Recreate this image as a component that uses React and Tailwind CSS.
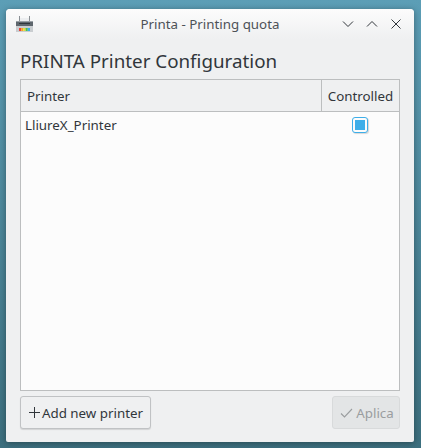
import React from "react";

function PrinterIcon() {
  return (
    <svg width="17" height="16" viewBox="0 0 17 16" className="block">
      <rect x="3" y="0" width="1" height="6" fill="#8a8f94" />
      <rect x="13" y="0" width="1" height="6" fill="#8a8f94" />
      <rect x="4" y="2" width="9" height="4" fill="#eceef0" />
      <rect x="0" y="5" width="17" height="1" fill="#9aa0a5" />
      <rect x="0" y="6" width="17" height="4" fill="#5e666d" />
      <rect x="3" y="7" width="11" height="1" fill="#2f363c" />
      <rect x="0" y="10" width="17" height="3" fill="#c9cdd0" />
      <rect x="0" y="15" width="17" height="1" fill="#c9cdd0" />
      <rect x="0" y="13" width="3" height="2" fill="#c9cdd0" />
      <rect x="14" y="13" width="3" height="2" fill="#c9cdd0" />
      <rect x="3" y="12" width="2.2" height="3" fill="#e8443a" />
      <rect x="5.2" y="12" width="2.2" height="3" fill="#f5a623" />
      <rect x="7.4" y="12" width="2.2" height="3" fill="#e3dc3c" />
      <rect x="9.6" y="12" width="2.2" height="3" fill="#4cc04f" />
      <rect x="11.8" y="12" width="2.2" height="3" fill="#3daee9" />
    </svg>
  );
}

function WinBtn({ d }) {
  return (
    <svg width="12" height="12" viewBox="0 0 12 12" fill="none" stroke="#31363b" strokeWidth="1" className="block">
      <path d={d} />
    </svg>
  );
}

export default function App() {
  return (
    <div
      className="w-[421px] h-[448px] overflow-hidden pt-[9px] pl-[6px] pr-[7px] pb-[6px] bg-gradient-to-b from-[#5c9eb6] to-[#3c6f7e] text-[#31363b] text-[13.33px] leading-[18px]"
      style={{ fontFamily: '"Noto Sans", sans-serif' }}
    >
      <div className="h-full flex flex-col bg-[#eff0f1] rounded-t-[4px] rounded-b-[2px] shadow-[0_1px_6px_rgba(0,0,0,0.35)]">
        <div className="relative h-[30px] shrink-0 flex items-center justify-between pl-[10px] pr-[12px] bg-gradient-to-b from-[#fcfcfc] to-[#eff0f1] rounded-t-[4px]">
          <PrinterIcon />
          <div className="absolute inset-x-0 top-[6px] text-center text-[13.33px] leading-[18px] text-[#4d5257]">Printa - Printing quota</div>
          <div className="flex items-center gap-[12px]">
            <WinBtn d="M1 3.5 L6 8.5 L11 3.5" />
            <WinBtn d="M1 8.5 L6 3.5 L11 8.5" />
            <WinBtn d="M1.5 1.5 L10.5 10.5 M10.5 1.5 L1.5 10.5" />
          </div>
        </div>

        <div className="flex-1 flex flex-col px-[14px] pb-[14px] min-h-0">
          <h1 className="h-[40px] shrink-0 flex items-center text-[18.8px] font-normal text-[#31363b] pt-[3px]">
            PRINTA Printer Configuration
          </h1>

          <div className="h-[312px] shrink-0 border border-[#bcbebf] bg-[#fcfcfc] flex flex-col">
            <div className="h-[32px] shrink-0 flex border-b border-[#bcbebf] bg-[#eff0f1]">
              <div className="flex-1 flex items-center pl-[6px] border-r border-[#bcbebf]">Printer</div>
              <div className="w-[77px] flex items-center justify-center">Controlled</div>
            </div>
            <div className="h-[26px] flex items-center">
              <div className="flex-1 pl-[4px]">LliureX_Printer</div>
              <div className="w-[77px] flex items-center justify-center pr-[1px]">
                <div className="w-[16px] h-[16px] rounded-[3px] border border-[#3daee9] bg-[#fcfcfc] flex items-center justify-center shadow-[1px_1px_1px_rgba(0,0,0,0.15)]">
                  <div className="w-[10px] h-[10px] bg-[#3daee9]" />
                </div>
              </div>
            </div>
          </div>

          <div className="flex justify-between mt-[5px]">
            <button className="w-[131px] h-[33px] flex items-center justify-center gap-[1px] rounded-[3px] border border-[#c0c2c4] bg-[#eff0f1] shadow-[0_1px_1px_rgba(0,0,0,0.12)] text-[#31363b]">
              <svg width="13" height="13" viewBox="0 0 13 13" stroke="#31363b" strokeWidth="1" className="block">
                <path d="M6.5 1 V12 M1 6.5 H12" />
              </svg>
              Add new printer
            </button>
            <button className="w-[68px] h-[33px] flex items-center justify-center gap-[3px] pl-[2px] rounded-[3px] border border-[#d8dadb] bg-[#e3e5e6] text-[#9a9d9f]">
              <svg width="13" height="13" viewBox="0 0 13 13" fill="none" stroke="#9a9d9f" strokeWidth="1.1" className="block">
                <path d="M1 7.5 L4.5 11 L12 3" />
              </svg>
              Aplica
            </button>
          </div>
        </div>
      </div>
    </div>
  );
}
